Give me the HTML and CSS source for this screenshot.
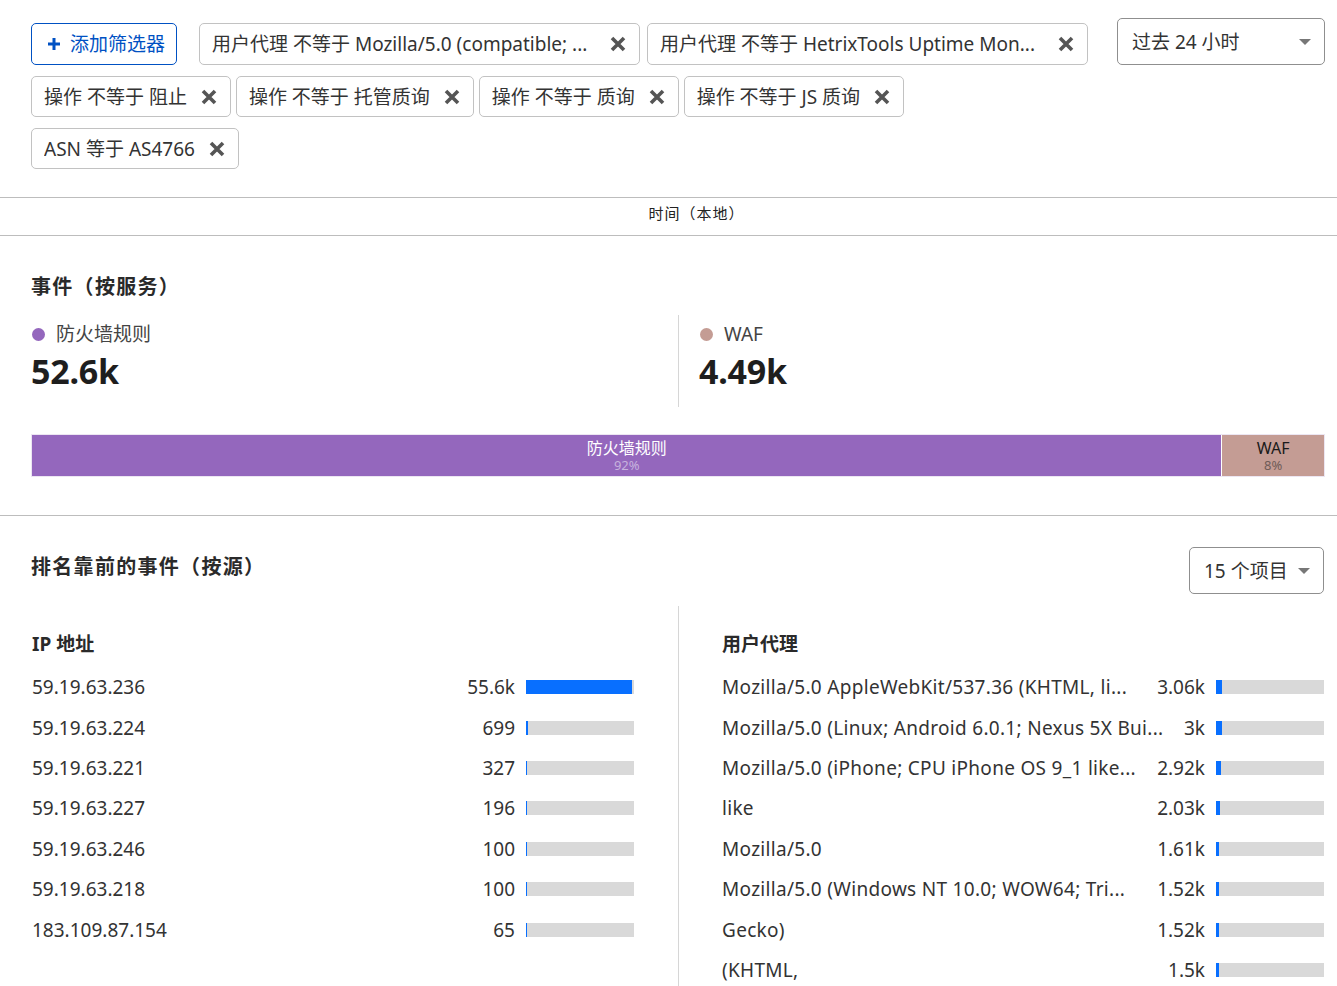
FILE: index.html
```
<!DOCTYPE html>
<html lang="zh-CN">
<head>
<meta charset="utf-8">
<title>事件</title>
<link rel="stylesheet" href="styles.css">
</head>
<body>
<div class="filters">
  <div class="filter-list">
    <button class="add-btn"><svg class="plus" viewBox="0 0 14 14"><path d="M7 1v12M1 7h12"/></svg><span>添加筛选器</span></button>
    <div class="chip chip-wide"><span class="chip-text">用户代理 不等于 Mozilla/5.0 (compatible; ...</span><svg class="x" viewBox="0 0 16 16"><path d="M2 2l12 12M14 2L2 14"/></svg></div>
    <div class="chip chip-wide"><span class="chip-text">用户代理 不等于 HetrixTools Uptime Mon...</span><svg class="x" viewBox="0 0 16 16"><path d="M2 2l12 12M14 2L2 14"/></svg></div>
    <div class="chip"><span class="chip-text">操作 不等于 阻止</span><svg class="x" viewBox="0 0 16 16"><path d="M2 2l12 12M14 2L2 14"/></svg></div>
    <div class="chip"><span class="chip-text">操作 不等于 托管质询</span><svg class="x" viewBox="0 0 16 16"><path d="M2 2l12 12M14 2L2 14"/></svg></div>
    <div class="chip"><span class="chip-text">操作 不等于 质询</span><svg class="x" viewBox="0 0 16 16"><path d="M2 2l12 12M14 2L2 14"/></svg></div>
    <div class="chip"><span class="chip-text">操作 不等于 JS 质询</span><svg class="x" viewBox="0 0 16 16"><path d="M2 2l12 12M14 2L2 14"/></svg></div>
    <div class="chip"><span class="chip-text">ASN 等于 AS4766</span><svg class="x" viewBox="0 0 16 16"><path d="M2 2l12 12M14 2L2 14"/></svg></div>
  </div>
  <div class="select time-select"><span>过去 24 小时</span><svg class="caret" viewBox="0 0 12 6"><path d="M0 0h12L6 6z"/></svg></div>
</div>

<div class="timebar">时间（本地）</div>

<section class="section services">
  <h2 class="title">事件（按服务）</h2>
  <div class="stats">
    <div class="stat">
      <div class="legend"><span class="dot dot-fw"></span>防火墙规则</div>
      <div class="stat-value">52.6k</div>
    </div>
    <div class="stat stat-right">
      <div class="legend"><span class="dot dot-waf"></span>WAF</div>
      <div class="stat-value">4.49k</div>
    </div>
  </div>
  <div class="stack">
    <div class="seg seg-fw" style="flex-grow:52.6"><span class="seg-name">防火墙规则</span><span class="seg-pct">92%</span></div>
    <div class="seg seg-waf" style="flex-grow:4.49"><span class="seg-name">WAF</span><span class="seg-pct">8%</span></div>
  </div>
</section>

<section class="section top">
  <div class="top-head">
    <h2 class="title">排名靠前的事件（按源）</h2>
    <div class="select count-select"><span>15 个项目</span><svg class="caret" viewBox="0 0 12 6"><path d="M0 0h12L6 6z"/></svg></div>
  </div>
  <div class="columns">
    <div class="col col-left">
      <h3 class="col-title">IP 地址</h3>
      <div class="row"><span class="label">59.19.63.236</span><span class="val">55.6k</span><span class="bar"><i style="width:106px"></i></span></div>
      <div class="row"><span class="label">59.19.63.224</span><span class="val">699</span><span class="bar"><i style="width:2px"></i></span></div>
      <div class="row"><span class="label">59.19.63.221</span><span class="val">327</span><span class="bar"><i style="width:1px"></i></span></div>
      <div class="row"><span class="label">59.19.63.227</span><span class="val">196</span><span class="bar"><i style="width:1px"></i></span></div>
      <div class="row"><span class="label">59.19.63.246</span><span class="val">100</span><span class="bar"><i style="width:1px"></i></span></div>
      <div class="row"><span class="label">59.19.63.218</span><span class="val">100</span><span class="bar"><i style="width:1px"></i></span></div>
      <div class="row"><span class="label">183.109.87.154</span><span class="val">65</span><span class="bar"><i style="width:1px"></i></span></div>
    </div>
    <div class="col col-right">
      <h3 class="col-title">用户代理</h3>
      <div class="row"><span class="label">Mozilla/5.0 AppleWebKit/537.36 (KHTML, li...</span><span class="val">3.06k</span><span class="bar"><i style="width:6px"></i></span></div>
      <div class="row"><span class="label">Mozilla/5.0 (Linux; Android 6.0.1; Nexus 5X Bui...</span><span class="val">3k</span><span class="bar"><i style="width:6px"></i></span></div>
      <div class="row"><span class="label">Mozilla/5.0 (iPhone; CPU iPhone OS 9_1 like...</span><span class="val">2.92k</span><span class="bar"><i style="width:5px"></i></span></div>
      <div class="row"><span class="label">like</span><span class="val">2.03k</span><span class="bar"><i style="width:4px"></i></span></div>
      <div class="row"><span class="label">Mozilla/5.0</span><span class="val">1.61k</span><span class="bar"><i style="width:3px"></i></span></div>
      <div class="row"><span class="label">Mozilla/5.0 (Windows NT 10.0; WOW64; Tri...</span><span class="val">1.52k</span><span class="bar"><i style="width:3px"></i></span></div>
      <div class="row"><span class="label">Gecko)</span><span class="val">1.52k</span><span class="bar"><i style="width:3px"></i></span></div>
      <div class="row"><span class="label">(KHTML,</span><span class="val">1.5k</span><span class="bar"><i style="width:3px"></i></span></div>
    </div>
  </div>
</section>
</body>
</html>
```
FILE: styles.css
```
html { overflow: hidden; }
* { box-sizing: border-box; }
body {
  margin: 0;
  background: #fff;
  color: #333;
  font-family: "Noto Sans", "Noto Sans CJK SC", sans-serif;
  font-size: 19px;
  line-height: 26px;
}
h2, h3 { margin: 0; }

/* filters */
.filters {
  display: flex;
  align-items: flex-start;
  padding: 18px 12px 28px 31px;
}
.filter-list {
  width: 1064px;
  display: flex;
  flex-wrap: wrap;
  gap: 11px 5px;
  padding-top: 5px;
}
.add-btn {
  display: flex;
  align-items: center;
  gap: 9px;
  height: 42px;
  padding: 0 11px 0 15px;
  margin-right: 17px;
  border: 1px solid #0051c3;
  border-radius: 5px;
  background: #fff;
  color: #0051c3;
  font: inherit;
}
.plus { width: 14px; height: 14px; }
.plus path { stroke: #0051c3; stroke-width: 3; fill: none; }
.chip {
  display: flex;
  align-items: center;
  gap: 14px;
  height: 41px;
  padding: 0 13px 0 12px;
  border: 1px solid #c2c2c2;
  border-radius: 5px;
  color: #333;
  white-space: nowrap;
}
.chip-wide { height: 42px; width: 441px; justify-content: space-between; }
.chip-wide:nth-child(3) { margin-left: 2px; }
.chip-text { overflow: hidden; text-overflow: ellipsis; }
.x { width: 16px; height: 16px; flex: none; }
.x path { stroke: #555; stroke-width: 3.6; fill: none; }

.select {
  display: flex;
  align-items: center;
  justify-content: space-between;
  height: 47px;
  border: 1px solid #8f8f8f;
  border-radius: 5px;
  color: #333;
}
.time-select {
  width: 208px;
  margin-left: auto;
  padding: 0 13px 0 14px;
}
.caret { width: 12px; height: 6px; }
.caret path { fill: #777; }

/* time bar */
.timebar {
  height: 39px;
  border-top: 1px solid #bdbdbd;
  border-bottom: 1px solid #bdbdbd;
  text-align: center;
  font-size: 15px;
  letter-spacing: 1px;
  line-height: 31px;
  color: #222;
  padding-left: 56px;
}

/* sections */
.section {
  padding: 38px 12px 38px 31px;
}
.services { border-bottom: 1px solid #bdbdbd; }
.title {
  font-size: 20px;
  font-weight: 700;
  line-height: 26px;
  letter-spacing: 1.3px;
  color: #2a2a2a;
}
.stats {
  display: grid;
  grid-template-columns: 647px 1fr;
  margin-top: 15px;
}
.stat {
  height: 92px;
  padding-top: 6px;
}
.stat-right {
  border-left: 1px solid #d6d6d6;
  padding-left: 20px;
}
.legend {
  display: flex;
  align-items: center;
  gap: 11px;
  color: #444;
}
.dot {
  width: 13px;
  height: 13px;
  border-radius: 50%;
  margin-left: 1px;
}
.dot-fw { background: #9467bd; }
.dot-waf { background: #c49c94; }
.stat-value {
  font-size: 34px;
  font-weight: 700;
  line-height: 42px;
  margin-top: 3px;
  color: #1e1e1e;
  letter-spacing: -0.2px;
}
.stack {
  display: flex;
  gap: 1px;
  height: 43px;
  margin-top: 27px;
  border: 1px solid #ece6f2;
  background: #fff;
}
.seg {
  display: flex;
  flex-direction: column;
  align-items: center;
  justify-content: center;
  flex-basis: 0;
}
.seg-fw { background: #9467bd; color: #fff; }
.seg-waf { background: #c49c94; color: #1a1a1a; }
.seg-name { font-size: 16px; line-height: 19px; font-weight: 400; }
.seg-pct { font-size: 13px; line-height: 14px; }
.seg-fw .seg-pct { color: #c7b3de; }
.seg-waf .seg-pct { color: #6f5b57; }

.top { padding-top: 31px; padding-bottom: 0; }
.top-head {
  display: flex;
  justify-content: space-between;
  align-items: flex-start;
}
.top-head .title { margin-top: 7px; }
.count-select {
  width: 135px;
  margin-right: 1px;
  padding: 0 13px 0 14px;
}
.columns {
  display: grid;
  grid-template-columns: 647px 1fr;
  margin-top: 12px;
}
.col { padding-top: 25px; }
.col-left { padding-right: 44px; padding-left: 1px; }
.col-right {
  border-left: 1px solid #d6d6d6;
  padding-left: 43px;
  padding-right: 1px;
  min-height: 400px;
}
.col-title {
  font-size: 19px;
  font-weight: 700;
  line-height: 26px;
  color: #2a2a2a;
  margin-bottom: 10px;
}
.row {
  display: flex;
  align-items: center;
  height: 40.43px;
}
.label {
  flex: 1;
  min-width: 0;
  white-space: nowrap;
  overflow: hidden;
  text-overflow: ellipsis;
}
.col-right .label { letter-spacing: 0.3px; }
.val {
  margin-left: 20px;
  text-align: right;
}
.bar {
  width: 108px;
  height: 14px;
  margin-left: 11px;
  background: #d9d9d9;
  display: flex;
}
.bar i {
  display: block;
  height: 100%;
  background: #086fff;
}
```
